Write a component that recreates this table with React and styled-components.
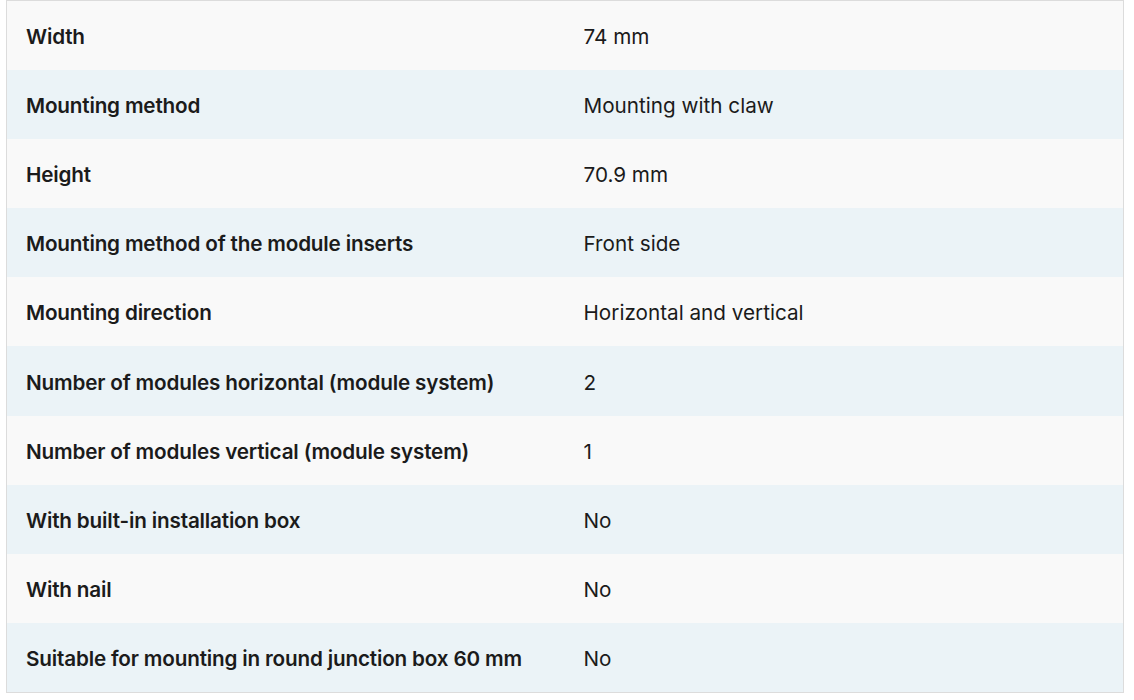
import React from 'react';
import styled, { createGlobalStyle } from 'styled-components';

const GlobalStyle = createGlobalStyle`
  html, body {
    margin: 0;
    padding: 0;
    background: #ffffff;
  }
  body {
    font-family: Inter, "Noto Sans", sans-serif;
  }
`;

const Wrapper = styled.div`
  padding: 0 10px 0 6px;
`;

const Table = styled.table`
  width: 1118px;
  border-collapse: collapse;
  border: 1px solid #dcdcdc;
  table-layout: fixed;
`;

const Row = styled.tr`
  background: ${props => (props.shaded ? '#ebf3f7' : '#f9f9f9')};
  height: 69.2px;
`;

const Label = styled.td`
  box-sizing: border-box;
  width: 557px;
  padding: 2px 20px 0 19px;
  font-size: 20.7px;
  font-weight: 600;
  color: #1b1b1b;
  letter-spacing: -0.18px;
`;

const Value = styled.td`
  padding: 2px 20px 0;
  font-size: 20.7px;
  font-weight: 400;
  color: #1b1b1b;
`;

const specs = [
  ['Width', '74 mm'],
  ['Mounting method', 'Mounting with claw'],
  ['Height', '70.9 mm'],
  ['Mounting method of the module inserts', 'Front side'],
  ['Mounting direction', 'Horizontal and vertical'],
  ['Number of modules horizontal (module system)', '2'],
  ['Number of modules vertical (module system)', '1'],
  ['With built-in installation box', 'No'],
  ['With nail', 'No'],
  ['Suitable for mounting in round junction box 60 mm', 'No'],
];

const App = () => (
  <>
    <GlobalStyle />
    <Wrapper>
      <Table>
        <tbody>
          {specs.map(([label, value], i) => (
            <Row key={label} shaded={i % 2 === 1}>
              <Label>{label}</Label>
              <Value>{value}</Value>
            </Row>
          ))}
        </tbody>
      </Table>
    </Wrapper>
  </>
);

export default App;
